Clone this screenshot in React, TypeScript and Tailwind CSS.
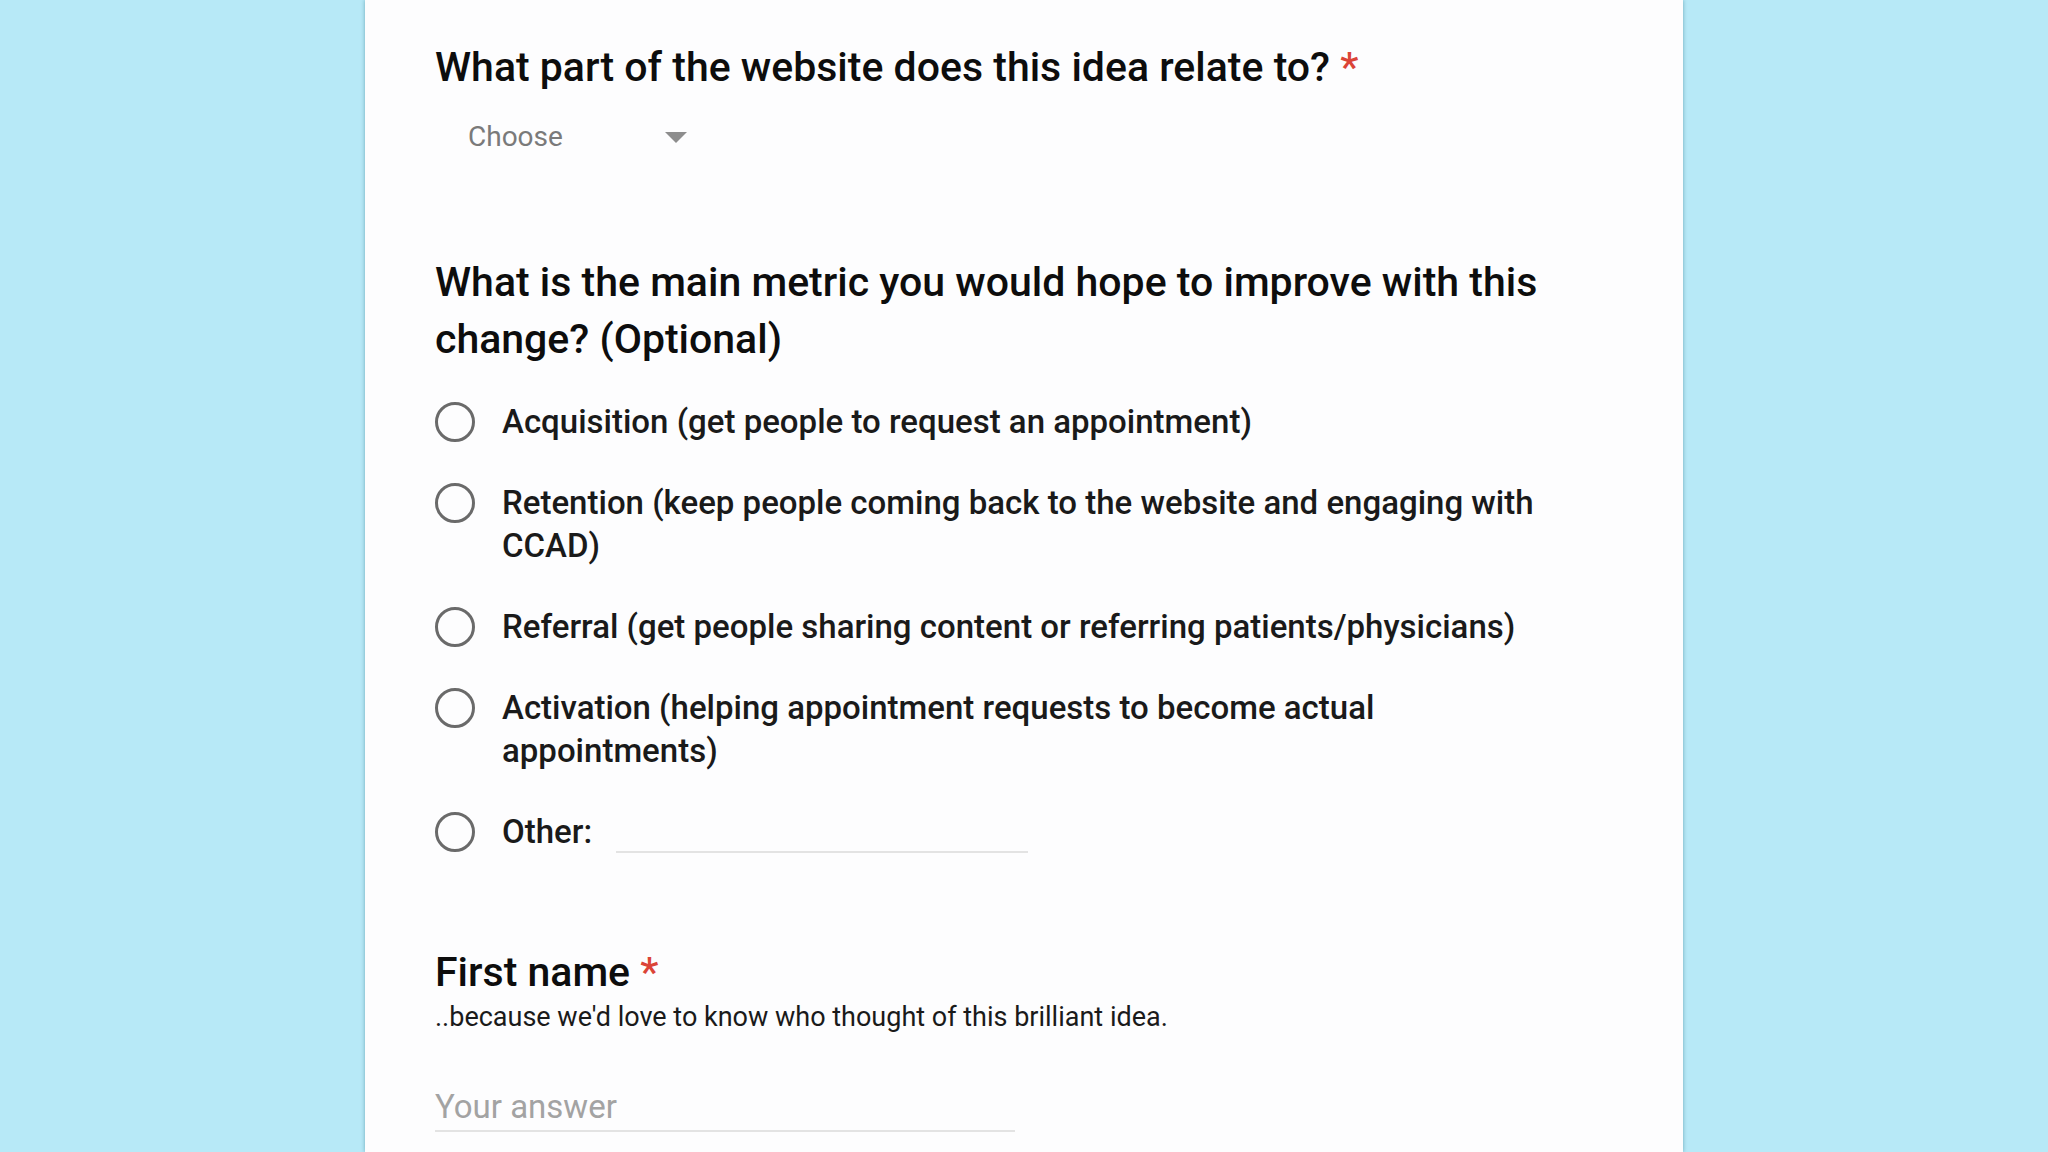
import { useState } from "react";

const options = [
  "Acquisition (get people to request an appointment)",
  "Retention (keep people coming back to the website and engaging with CCAD)",
  "Referral (get people sharing content or referring patients/physicians)",
  "Activation (helping appointment requests to become actual appointments)",
];

function Radio({ checked }: { checked: boolean }) {
  return (
    <span className="mt-[1.5px] flex h-[40px] w-[40px] shrink-0 items-center justify-center rounded-full border-[3.5px] border-[#6a6a6a]">
      {checked && <span className="h-[20px] w-[20px] rounded-full bg-[#673ab7]" />}
    </span>
  );
}

export default function App() {
  const [selected, setSelected] = useState<number | null>(null);

  return (
    <div className="flex h-[1152px] justify-center overflow-hidden bg-[#b7e9f7] font-['Roboto',sans-serif]">
      <div className="w-[1318px] bg-[#fdfdfe] px-[70px] pt-[40px] shadow-[0_0_4px_rgba(20,90,110,0.45)]">
        <div className="w-[1140px]">
          {/* Question 1 */}
          <h2 className="text-[41px] font-medium leading-[54px] text-[#0d0d0d]">
            What part of the website does this idea relate to?{" "}
            <span className="text-[#db4437]">*</span>
          </h2>
          <div className="mt-[22px] flex h-[42px] w-[262px] items-center justify-between pl-[33px] pr-[10px]">
            <span className="text-[28px] text-[#7a7a7a]">Choose</span>
            <svg width="22" height="11" viewBox="0 0 22 11">
              <path d="M0 0 L22 0 L11 11 Z" fill="#8d8d8d" />
            </svg>
          </div>

          {/* Question 2 */}
          <h2 className="mt-[96px] text-[41px] font-medium leading-[57px] text-[#0d0d0d]">
            What is the main metric you would hope to improve with this change? (Optional)
          </h2>
          <div className="mt-[32px] flex flex-col gap-[38px]">
            {options.map((label, i) => (
              <label
                key={i}
                className="flex cursor-pointer items-start gap-[27px]"
                onClick={() => setSelected(i)}
              >
                <Radio checked={selected === i} />
                <span className="text-[33px] font-medium leading-[43px] text-[#1a1a1a]">{label}</span>
              </label>
            ))}
            <label className="flex cursor-pointer items-start" onClick={() => setSelected(4)}>
              <Radio checked={selected === 4} />
              <span className="ml-[27px] text-[33px] font-medium leading-[43px] text-[#1a1a1a]">Other:</span>
              <input
                className="ml-[24px] h-[43px] w-[412px] border-b-2 border-[#e3e3e3] bg-transparent text-[28px] outline-none"
                aria-label="Other"
              />
            </label>
          </div>

          {/* First name */}
          <h2 className="mt-[92px] text-[41px] font-medium leading-[54px] text-[#0d0d0d]">
            First name <span className="text-[#db4437]">*</span>
          </h2>
          <p className="text-[27px] leading-[36px] text-[#1a1a1a]">
            ..because we'd love to know who thought of this brilliant idea.
          </p>
          <input
            placeholder="Your answer"
            className="mt-[49px] h-[48px] w-[580px] border-b-2 border-[#e3e3e3] bg-transparent text-[33px] text-[#1a1a1a] outline-none placeholder:text-[#a3a3a3]"
          />
        </div>
      </div>
    </div>
  );
}
